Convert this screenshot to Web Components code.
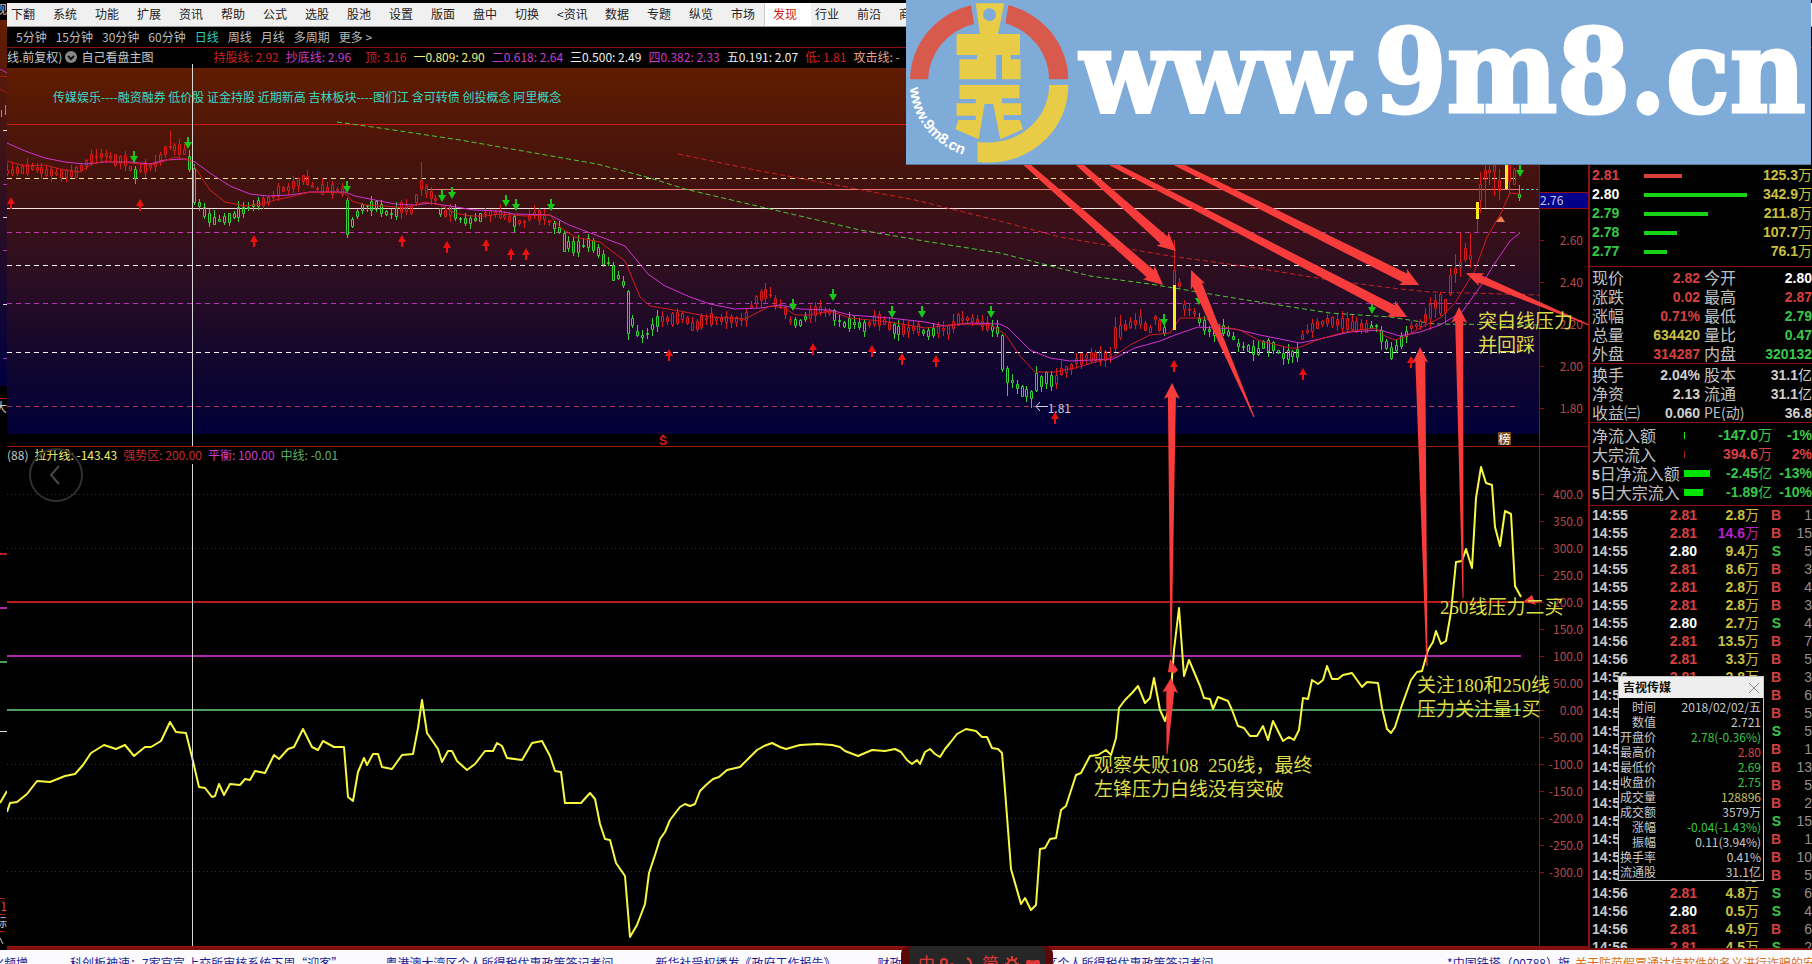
<!DOCTYPE html>
<html lang="zh-CN">
<head>
<meta charset="utf-8">
<title>吉视传媒 日线</title>
<style>
html,body{margin:0;height:100%;background:#000;overflow:hidden}
body{font:12px/16px "Noto Sans CJK SC",sans-serif;color:#c8c8c8}
</style>
</head>
<body>
<trading-app></trading-app>
<script>
const define = (name, html, setup) => customElements.define(name, class extends HTMLElement {
  constructor() {
    super();
    this.attachShadow({mode: 'open'}).innerHTML = html;
  }
  connectedCallback() {
    if (this.ready) return;
    this.ready = true;
    if (setup) setup(this.shadowRoot, this);
  }
});

/* ---------- menu ---------- */
define('menu-bar', `<style>
:host{display:block;margin-top:3px;height:23px;background:#f0f0f0;border-bottom:1px solid #999;overflow:hidden}
nav{display:flex;height:100%}
button{font:inherit;color:#222;background:none;border:0;margin:0;padding:0 0 2px 4px;min-width:42px;text-align:left;white-space:nowrap;line-height:20px;flex:none}
button.wide{min-width:48px}
button.on{color:#d01818;background:#fff;box-shadow:-4px 0 0 #fff,-5px 0 0 #ccc}
</style><nav></nav>`, root => {
  const nav = root.querySelector('nav');
  '下翻 系统 功能 扩展 资讯 帮助 公式 选股 股池 设置 版面 盘中 切换 <资讯 数据 专题 纵览 市场 发现 行业 前沿 商城'.split(' ').forEach(t => {
    const b = document.createElement('button');
    b.textContent = t;
    if (t[0] === '<') b.className = 'wide';
    if (t === '发现') b.className = 'on';
    nav.append(b);
  });
});

define('period-bar', `<style>
:host{display:block;height:20px;border-bottom:1px solid #8c1010}
nav{display:flex;gap:9px;padding-left:9px}
button{font:inherit;color:#bbb;background:none;border:0;margin:0;padding:0;line-height:20px;white-space:nowrap}
.on{color:#2fc8b8}
</style><nav><button>5分钟</button><button>15分钟</button><button>30分钟</button><button>60分钟</button><button class="on">日线</button><button>周线</button><button>月线</button><button>多周期</button><button>更多 &gt;</button></nav>`);

/* ---------- shared drawing helpers ---------- */
const line = (pts, stroke, extra = '') => `<polyline points="${pts}" fill="none" stroke="${stroke}" ${extra}/>`;
const hline = (y, stroke, x1, x2, extra = '') => `<path d="M${x1} ${y}H${x2}" stroke="${stroke}" ${extra}/>`;

const trace = [[8,172],[35,168],[45,172],[60,174],[75,174],[85,165],[92,158],[105,154],[115,160],[125,160],[130,168],[135,174],[145,168],[155,165],[163,154],[168,147],[175,148],[185,152],[190,163],[195,185],[200,207],[206,214],[212,221],[224,220],[230,218],[240,212],[255,205],[270,200],[280,190],[290,188],[298,182],[305,178],[315,189],[340,190],[345,193],[348,218],[353,224],[358,213],[363,207],[378,205],[385,213],[395,215],[400,207],[412,210],[418,195],[422,184],[428,192],[435,198],[442,215],[453,210],[458,218],[468,222],[482,217],[486,213],[498,213],[507,218],[516,222],[526,222],[532,213],[546,218],[552,224],[561,231],[565,242],[571,247],[581,247],[589,243],[595,246],[601,255],[605,262],[610,264],[616,273],[621,281],[625,285],[630,312],[635,332],[645,338],[650,330],[660,319],[669,320],[685,316],[690,325],[695,328],[705,319],[743,320],[748,315],[753,303],[764,294],[769,293],[777,304],[784,307],[789,320],[799,324],[808,316],[819,309],[833,314],[843,325],[853,323],[867,328],[872,320],[882,320],[892,328],[898,331],[918,328],[923,332],[932,334],[936,329],[951,330],[956,320],[975,319],[982,324],[1001,332],[1006,352],[1011,380],[1022,391],[1030,394],[1036,399],[1041,382],[1045,377],[1055,383],[1060,372],[1071,368],[1075,362],[1086,357],[1110,356],[1115,350],[1119,339],[1124,328],[1140,320],[1150,332],[1154,315],[1159,325],[1169,335],[1179,282],[1184,307],[1194,312],[1199,320],[1213,334],[1223,329],[1233,337],[1238,345],[1258,352],[1263,345],[1273,346],[1283,356],[1298,353],[1303,335],[1313,327],[1327,321],[1347,324],[1367,328],[1377,326],[1383,339],[1392,354],[1402,341],[1411,327],[1421,324],[1426,318],[1437,302],[1447,307],[1452,285],[1457,265],[1467,252],[1472,254],[1477,210],[1482,185],[1487,178],[1492,165],[1501,190],[1511,170],[1516,180],[1520,198]];
const green = [[132,137],[189,259],[347,400],[440,445],[451,485],[506,508],[514,519],[551,662],[792,809],[832,868],[890,899],[921,934],[990,1053],[1163,1170],[1198,1300],[1371,1408],[1518,1523]];
/* body top, body bottom, high, low of the bars that stand out */
const special = {33:[146,148,131,150],37:[156,170,150,172],38:[168,203,164,205],69:[200,235,198,238],84:[180,190,162,196],113:[233,252,231,252],123:[265,281,262,281],126:[291,334,290,340],202:[335,370,334,372],203:[368,383,366,396],208:[391,399,390,408],209:[373,391,366,392],225:[327,349,317,352],226:[325,338,315,340],237:[270,295,240,299],279:[330,342,326,350],293:[275,295,268,296],295:[262,268,233,277],297:[255,260,233,268],300:[170,180,160,208],302:[165,172,160,196]};
function candles() {
  let out = '', k = 0;
  for (let i = 0; i < 308; i++) {
    const x = 7.5 + Math.round(4.925 * i);
    if ([236, 298, 304].includes(i)) continue;
    while (k < trace.length - 2 && trace[k + 1][0] < x) k++;
    const [ax, ay] = trace[k], [bx, by] = trace[k + 1];
    const y = ay + (by - ay) * Math.min(1, Math.max(0, (x - ax) / (bx - ax)));
    const r = n => Math.abs(Math.sin(i * 12.9898 + n * 78.233) * 43758.5453) % 1;
    const late = x > 1430 ? 2 : 1;
    const h = 1 + r(1) * 5 * late;
    let [t, b, hi, lo] = special[i] || [y - h, y + h, y - h - r(2) * 7 * late, y + h + r(3) * 6 * late];
    t = Math.round(t); b = Math.round(b); hi = Math.round(hi); lo = Math.round(lo);
    const c = green.some(g => x >= g[0] && x <= g[1]) ? '#35d435' : '#d81c1c';
    out += `<path d="M${x} ${hi}V${t}M${x} ${b}V${lo}M${x - 1} ${t + .5}h2v${b - t - 1}h-2z" stroke="${c}" fill="none"/>`;
  }
  return out;
}
const down = [[134,151],[188,137],[347,181],[442,190],[452,187],[506,195],[516,199],[551,199],[793,299],[833,289],[892,306],[922,306],[991,306],[1164,314],[1199,293],[1372,302],[1520,165]];
const up = [[11,197],[140,199],[254,235],[402,235],[447,241],[486,239],[511,248],[526,248],[669,349],[813,343],[872,345],[902,353],[936,355],[1055,412],[1174,360],[1303,368],[1411,356]];

define('price-chart', `<style>
:host{display:flex;flex-direction:column;position:relative;min-height:0;border-bottom:1px solid #a01808}
.legend{display:flex;gap:7px;height:20px;line-height:18px;white-space:nowrap;flex:none;overflow:hidden}
.legend svg{width:12px;height:12px;margin:3px -3px 0 -4px}
.name{margin-right:53px}
.plot{flex:1;min-height:0;display:block;width:100%}
.r{color:#d42020}.m{color:#c83cc8}.gap{margin-right:7px}.y{color:#f0f080}.w{color:#eee}.p{color:#e8a090}
.tags{position:absolute;left:46px;right:900px;top:41px;color:#35dcc8;white-space:nowrap}
.low{position:absolute;right:calc(100% - 1064px);top:352px;color:#c8c8d8}
.mark{position:absolute;left:652px;bottom:-2px;color:#e01818;font:bold 12px/14px "Liberation Sans",sans-serif}
.rank{position:absolute;right:28px;bottom:1px;background:#7c4a1c;color:#fff;line-height:13px;width:13px;text-align:center}
</style>
<div class="legend"><span>线.前复权)</span><svg viewBox="0 0 12 12"><circle cx="6" cy="6" r="6" fill="#888"/><path d="M3 5l3 3 3-3" fill="none" stroke="#111" stroke-width="2"/></svg><span class="name">自己看盘主图</span><span class="r">持股线: 2.92</span><span class="m gap">抄底线: 2.96</span><span class="r">顶: 3.16</span><span class="y">一0.809: 2.90</span><span class="m">二0.618: 2.64</span><span class="w">三0.500: 2.49</span><span class="m">四0.382: 2.33</span><span class="w">五0.191: 2.07</span><span class="r">低: 1.81</span><span class="p">攻击线: -</span></div>
<svg class="plot" viewBox="7 68 1532 378" preserveAspectRatio="none"></svg>
<div class="tags">传媒娱乐----融资融券 低价股 证金持股 近期新高 吉林板块----图们江 含可转债 创投概念 阿里概念</div>
<span class="low">1.81</span><span class="mark">S</span><span class="rank">榜</span>`, root => {
  const dash = 'stroke-dasharray="5 4"';
  root.querySelector('.plot').innerHTML = `
<defs><linearGradient id="g" x1="0" y1="0" x2="0" y2="1"><stop offset="0" stop-color="#601c00"/><stop offset=".3" stop-color="#43120e"/><stop offset=".55" stop-color="#2e0e20"/><stop offset=".8" stop-color="#12062e"/><stop offset="1" stop-color="#000038"/></linearGradient></defs>
<rect x="7" y="68" width="1532" height="366" fill="url(#g)"/>
${hline(124.5,'#d01810',7,1539)}
${hline(178.5,'#f0e890',7,1517,dash)}
${hline(189.5,'#e87c74',427,1520)}
${hline(208.5,'#f8e0e0',7,1539)}
${hline(232.5,'#c834b8',7,1520,dash)}
${hline(265.5,'#f8f8f8',7,1517,dash)}
${hline(303.5,'#b434b4',7,1517,dash)}
${hline(352.5,'#f8f8f8',7,1517,dash)}
${hline(406.5,'#b83848',7,1517,dash)}
${line('337,122 380,128 420,134 460,140 500,147 540,154 597,164 650,178 685,189 740,202 800,216 860,230 930,242 1000,253 1090,276 1150,284 1240,299 1330,313 1390,317 1435,324 1539,325','#4cc832','stroke-dasharray="5 3"')}
${line('678,154 760,171 820,182 915,200 1000,221 1060,237 1170,256 1250,267 1330,280 1400,289 1430,292 1539,295','#cc2020','stroke-dasharray="5 3"')}
${candles()}
${line('7,143 25,151 45,158 65,162 85,164 105,162 130,162 150,164 165,160 185,159 195,162 210,173 230,186 250,194 268,196 290,195 310,192 345,192 355,196 375,200 395,204 415,205 430,203 450,206 474,210 498,211 514,214 550,215 569,225 593,234 625,246 648,274 665,286 690,297 710,304 735,309 760,308 780,305 800,309 830,310 850,315 890,318 925,322 945,326 970,323 1000,324 1008,328 1030,350 1050,358 1070,361 1113,359 1135,348 1160,341 1175,335 1198,327 1215,328 1235,329 1260,335 1300,343 1320,339 1350,332 1380,330 1400,336 1420,332 1440,325 1462,312 1480,287 1495,263 1510,241 1520,233','#d034d0')}
${line('7,161 25,166 45,165 60,169 80,172 92,164 105,161 130,163 150,165 162,162 175,157 190,160 200,175 210,190 225,202 245,206 262,204 275,200 290,197 310,192 345,193 352,201 365,205 385,206 405,208 415,205 425,202 440,205 455,213 470,216 485,216 500,214 525,216 550,215 560,227 575,237 600,242 625,261 640,297 650,306 680,311 710,317 745,319 770,306 785,308 795,315 810,315 830,311 850,318 890,322 925,328 960,324 990,325 1005,334 1020,356 1035,372 1055,372 1075,368 1113,357 1130,345 1150,335 1170,333 1180,318 1205,318 1218,326 1240,330 1260,341 1290,348 1298,348 1320,339 1345,332 1375,328 1385,336 1395,340 1405,337 1420,328 1440,318 1455,303 1475,270 1487,237 1500,215 1510,193 1520,194','#d41c1c')}
<path d="M1174.500 285V330M1477.500 202V219M1506.500 160V189" stroke="#ffe820" stroke-width="3"/>
<path d="M1477.500 219V233" stroke="#d81c1c"/>
<path d="M1521 189.500H1538" stroke="#50c0c8" stroke-dasharray="3 2"/>
<path d="M1496 222l5-6 4 6z" fill="#f08050"/>
<path d="M1048 406.500H1036M1040 402l-4 4.500 4 4.500" fill="none" stroke="#d0d0e0"/>
<path d="M661 437l2-3 2 3z" fill="#e01818"/>
${down.map(([x,y]) => `<path d="M${x-1} ${y}h2v5h3l-4 7-4-7h3z" fill="#18c818"/>`).join('')}
${up.map(([x,y]) => `<path d="M${x-1} ${y+12}h2v-5h3l-4-7-4 7h3z" fill="#ec1010"/>`).join('')}`;
});

define('osc-chart', `<style>
:host{display:flex;flex-direction:column;position:relative;min-height:0;border-bottom:1px solid #a01010}
.legend{display:flex;gap:6px;height:17px;line-height:15px;white-space:nowrap;flex:none}
svg{flex:1;min-height:0;width:100%;display:block}
.y{color:#f0f070}.r{color:#c82828}.m{color:#c83cc8}.g{color:#5cae68}
button{position:absolute;left:22px;top:1px;width:54px;height:54px;border:2px solid #303030;border-radius:50%;background:none;padding:0}
button svg{display:block;margin:auto;width:16px;height:22px}
</style>
<button aria-label="上一张"><svg viewBox="0 0 16 22"><path d="M11 2L3 11l8 9" fill="none" stroke="#484848" stroke-width="2"/></svg></button>
<div class="legend"><span>(88)</span><span class="y">拉升线: -143.43</span><span class="r">强势区: 200.00</span><span class="m">平衡: 100.00</span><span class="g">中线: -0.01</span></div>
<svg class="plot" viewBox="7 464 1532 482" preserveAspectRatio="none"></svg>`, root => {
  root.querySelector('.plot').innerHTML =
    [494.5,548.5,764.5,818.5,871.5].map(y => hline(y,'#6e1818',7,1539,'stroke-dasharray="1 3"')).join('') +
    hline(602,'#b81c1c',7,1539,'stroke-width="2"') + hline(656,'#a82ca8',7,1521,'stroke-width="2"') + hline(710,'#4c9c5c',7,1521,'stroke-width="2"') +
    line('7,812 10,803 17,802 27,794 37,781 50,782 65,776 75,774 83,765 91,753 104,745 116,749 125,745 134,756 145,747 151,747 161,741 170,722 176,732 186,733 192,757 199,787 205,788 212,797 215,796 219,784 224,795 230,784 240,785 245,779 250,780 255,771 265,773 274,755 279,759 288,749 294,747 303,729 312,747 318,750 323,741 334,747 344,747 348,797 353,801 358,772 364,758 367,765 373,754 378,754 382,767 392,769 402,755 413,754 418,728 422,700 427,733 438,749 442,762 448,751 452,751 457,761 467,770 475,764 485,751 493,751 497,743 502,746 507,758 522,760 532,743 542,741 550,756 555,771 561,772 565,803 581,803 590,793 595,799 600,824 605,839 610,840 616,863 625,876 630,937 637,925 645,904 649,873 655,855 660,839 665,832 670,820 680,807 685,804 690,806 695,804 700,791 706,785 713,779 719,777 727,770 740,767 750,757 757,750 764,746 772,743 780,747 786,749 800,745 818,744 832,745 840,747 845,751 858,756 865,753 872,750 885,751 895,749 901,752 907,760 912,764 917,760 920,764 925,752 930,749 935,754 940,757 945,749 950,743 957,734 966,729 976,731 982,737 987,737 992,748 998,749 1002,753 1005,790 1011,869 1021,904 1025,898 1031,910 1036,905 1040,849 1045,848 1050,839 1056,838 1061,810 1066,806 1076,775 1081,773 1090,756 1098,755 1106,750 1111,755 1116,738 1119,708 1125,700 1132,693 1138,686 1145,703 1150,698 1154,678 1160,710 1165,721 1170,705 1174,650 1179,608 1184,676 1189,660 1200,686 1204,698 1210,699 1213,709 1218,697 1228,701 1232,710 1238,726 1244,728 1250,736 1257,736 1263,726 1268,740 1273,721 1283,741 1289,737 1294,740 1299,730 1303,698 1308,699 1312,680 1318,684 1323,680 1327,666 1332,679 1338,679 1343,675 1352,673 1362,687 1367,682 1378,683 1382,708 1387,729 1391,733 1395,727 1402,705 1411,680 1417,672 1422,671 1428,650 1433,642 1436,631 1441,644 1446,641 1451,612 1456,562 1462,561 1466,549 1472,568 1476,498 1481,467 1486,483 1492,485 1495,527 1500,546 1505,511 1511,514 1515,586 1521,597','#f8f840','stroke-width="2" stroke-linejoin="round"');
});

/* ---------- vertical scale beside a chart ---------- */
define('value-axis', `<style>
:host{display:block;position:relative;border:solid #901010;border-width:0 1px 1px;min-height:0;overflow:hidden}
ol{list-style:none;margin:0;padding:var(--lead) 5px 0 0;text-align:right;color:#b84848}
li{height:var(--step);line-height:var(--step);position:relative}
li::before{content:"";position:absolute;left:0;top:50%;width:4px;border-top:1px solid #901010}
</style><ol></ol><slot></slot>`, (root, host) => {
  root.querySelector('ol').innerHTML = host.getAttribute('values').split(' ').map(v => `<li>${v}</li>`).join('');
});

/* ---------- order book, quote and trades ---------- */
define('order-book', `<style>
:host{display:block;padding:118px 0 5px 2px;border-bottom:1px solid #901010}
table{border-collapse:collapse;width:100%;font:bold 14px/19px "Liberation Sans","Noto Sans CJK SC",sans-serif}
td{padding:0;height:19px;white-space:nowrap}
td:last-child{text-align:right;color:#c8c040}
small{font:14px/14px "Noto Sans CJK SC",sans-serif}
td:first-child{width:52px}
i{display:block;height:4px;background:currentColor}
.r{color:#d84040}.w{color:#fff}.g{color:#38c848}.g i{color:#18d418}
</style><table><tbody></tbody></table>`, root => {
  root.querySelector('tbody').innerHTML = [['2.81','r',38,'125.3'],['2.80','w',103,'342.9'],['2.79','g',64,'211.8'],['2.78','g',33,'107.7'],['2.77','g',23,'76.1']]
    .map(([p,c,w,v]) => `<tr><td class="${c}">${p}</td><td class="${c==='w'?'g':c}"><i style="width:${w}px"></i></td><td>${v}<small>万</small></td></tr>`).join('');
});

define('quote-grid', `<style>
:host{display:block;border-bottom:1px solid #901010;padding:1px 0 0 2px}
dl{display:grid;grid-auto-rows:19px;margin:0;grid-template-columns:48px 60px 46px 1fr}
dt{font-size:16px;line-height:19px;white-space:nowrap;color:#c0c0c0}
dt:nth-of-type(2n){padding-left:4px}
dt.s{font-size:14px}
dd{margin:0;text-align:right;font:bold 14px/21px "Liberation Sans","Noto Sans CJK SC",sans-serif;white-space:nowrap;color:#d0d0d0}
small{font:14px/14px "Noto Sans CJK SC",sans-serif}
.r{color:#d84040}.w{color:#fff}.g{color:#38c848}.y{color:#c8c040}
</style><dl></dl>`, (root, host) => {
  root.querySelector('dl').innerHTML = host.getAttribute('data').split(';').map(s => {
    const [k, v, c] = s.split(',');
    return `<dt class="${k.startsWith('PE') ? 's' : ''}">${k}</dt><dd class="${c || ''}">${v.replace('亿', '<small>亿</small>')}</dd>`;
  }).join('');
});

define('money-flow', `<style>
:host{display:block;border-bottom:1px solid #901010;padding:3px 0 3px 2px}
ul{list-style:none;margin:0;padding:0}
li{display:grid;grid-template-columns:92px 26px 62px 1fr;align-items:center;height:19px;white-space:nowrap;text-align:right;font:bold 14px/19px "Liberation Sans",sans-serif}
span{font:16px/19px "Noto Sans CJK SC",sans-serif;text-align:left;color:#c0c0c0}
b{font:bold 14px/14px "Liberation Sans",sans-serif;color:#d0d0d0}
small{font:14px/14px "Noto Sans CJK SC",sans-serif}
i{height:7px;background:#00e400}
.r{color:#d84040}.g{color:#38c848}.r i{background:#a02020}
</style><ul></ul>`, root => {
  root.querySelector('ul').innerHTML = [['净流入额','g',1,'-147.0','万','-1%'],['大宗流入','r',1,'394.6','万','2%'],['<b>5</b>日净流入额','g',26,'-2.45','亿','-13%'],['<b>5</b>日大宗流入','g',19,'-1.89','亿','-10%']]
    .map(([n,c,w,v,u,p]) => `<li class="${c}"><span>${n}</span><i style="width:${w}px"></i><div>${v}<small>${u}</small></div><div>${p}</div></li>`).join('');
});

define('trade-list', `<style>
:host{display:block;flex:1;min-height:0;overflow:hidden;padding-left:2px}
table{border-collapse:collapse;width:100%;table-layout:fixed;font:bold 14px/18px "Liberation Sans",sans-serif;color:#c8c8c8}
td{padding:0;height:18px;line-height:18px;white-space:nowrap;text-align:right;overflow:hidden}
td:nth-child(1){width:50px;text-align:left}td:nth-child(2){width:55px}td:nth-child(3){width:62px;color:#c8c040}td:nth-child(4){width:22px}
td:nth-child(5){font-weight:400;color:#909090}
small{font:14px/14px "Noto Sans CJK SC",sans-serif}
.r{color:#d84040}.w{color:#fff}.g{color:#38c848}td.m{color:#b820c8!important}
</style><table><tbody></tbody></table>`, root => {
  const side = 'BBSBBBSBBBBBSBBBBSBBBSSBS';
  const vol = ['2.8','14.6','9.4','8.6','2.8','2.8','2.7','13.5','3.3','2.8','','','','','','','','','','','2.8','4.8','0.5','4.9','4.5'];
  const count = [1,15,5,3,4,3,4,7,5,3,6,5,5,1,13,5,2,15,1,10,5,6,4,6,2];
  root.querySelector('tbody').innerHTML = count.map((n, i) => {
    const white = [2, 6, 22].includes(i);
    return `<tr><td>14:5${i < 7 ? 5 : 6}</td><td class="${white ? 'w' : 'r'}">${vol[i] ? (white ? '2.80' : '2.81') : ''}</td><td class="${i === 1 ? 'm' : ''}">${vol[i] ? vol[i] + '<small>万</small>' : ''}</td><td class="${side[i] === 'S' ? 'g' : 'r'}">${side[i]}</td><td>${n}</td></tr>`;
  }).join('');
});

define('day-popup', `<style>
:host{display:block;position:absolute;box-sizing:border-box;left:28px;top:628px;width:146px;background:#000;border:1px solid #c8c8c8}
header{display:flex;justify-content:space-between;align-items:center;height:21px;background:#eee;color:#111;padding:0 3px 0 4px}
h2{font:bold 12px/18px "Noto Sans CJK SC",sans-serif;margin:0 0 2px}
button{border:0;background:none;padding:0;width:12px;height:12px}
button svg{display:block;width:12px;height:12px}
dl{display:grid;grid-template-columns:36px 1fr;grid-auto-rows:15px;line-height:15px;margin:0;padding:1px 2px 1px 1px;text-align:right;white-space:nowrap}
dd{margin:0}
.g{color:#38c848}.r{color:#d84040}.y{color:#c8c060}
</style><header><h2>吉视传媒</h2><button aria-label="关闭"><svg viewBox="0 0 12 12"><path d="M1 1l10 10M11 1L1 11" stroke="#888"/></svg></button></header>
<dl><dt>时间</dt><dd>2018/02/02/五</dd><dt>数值</dt><dd>2.721</dd><dt>开盘价</dt><dd class="g">2.78(-0.36%)</dd><dt>最高价</dt><dd class="r">2.80</dd><dt>最低价</dt><dd class="g">2.69</dd><dt>收盘价</dt><dd class="g">2.75</dd><dt>成交量</dt><dd class="y">128896</dd><dt>成交额</dt><dd>3579万</dd><dt>涨幅</dt><dd class="g">-0.04(-1.43%)</dd><dt>振幅</dt><dd>0.11(3.94%)</dd><dt>换手率</dt><dd>0.41%</dd><dt>流通股</dt><dd>31.1亿</dd></dl>`);

/* ---------- strip of the neighbouring window at the left edge ---------- */
define('edge-strip', `<style>
:host{display:block;position:relative;overflow:hidden}
svg{position:absolute;inset:0;width:100%;height:100%}
span{position:absolute;right:0;line-height:16px}
</style><svg viewBox="0 0 7 950" preserveAspectRatio="none"><defs><linearGradient id="s" x1="0" y1="0" x2="0" y2="1"><stop offset="0" stop-color="#661e00"/><stop offset=".5" stop-color="#2e0e20"/><stop offset="1" stop-color="#000040"/></linearGradient></defs>
<rect y="20" width="7" height="366" fill="url(#s)"/>
<path d="M0 76.500H7M0 89l7 4M0 398.500H7M0 898.500H5M0 914.500H5M0 931.500H5" stroke="#b01810"/><path d="M0 69l7 4" stroke="#c030c0"/><path d="M1.500 110v7M5.500 105v10" stroke="#35d435"/>
<path d="M3 130.500h4" stroke="#f0e890"/><path d="M3 184.500h4M3 250.500h4M3 358.500h4" stroke="#b830a8"/><path d="M3 217.500h4M3 304.500h4M0 731.500h7" stroke="#ddd"/>
<path d="M0 554h7" stroke="#b81c1c" stroke-width="2"/><path d="M0 608h7" stroke="#a82ca8" stroke-width="2"/><path d="M0 662h7" stroke="#4c9c5c" stroke-width="2"/><path d="M0 803l7-12" stroke="#f8f840" stroke-width="2"/><path d="M0 938l3 6" stroke="#ccc"/></svg>
<span style="top:1px">观</span><span style="top:399px">大</span><span style="top:898px;color:#d84040">1</span><span style="top:914px">标</span>`);

/* ---------- hand-drawn arrows and remarks over both charts ---------- */
define('chart-note', `<style>
:host{display:block;position:absolute;left:calc(var(--x)/1812*100%);top:calc(var(--y)/964*100%);font:19px/24px "Liberation Serif","Noto Sans CJK SC",serif;color:#dcdc48;white-space:pre}
</style><slot></slot>`);
define('mark-layer', `<style>
:host{display:block;position:absolute;inset:0;pointer-events:none}
svg{position:absolute;inset:0;width:100%;height:100%}
</style><svg viewBox="0 0 1812 964" preserveAspectRatio="none"></svg><slot></slot>`, root => {
  const arrow = ([tx, ty, x, y, w0, w1, len, half]) => {
    const L = Math.hypot(x - tx, y - ty), ux = (x - tx) / L, uy = (y - ty) / L;
    const p = (d, o) => `${(x - ux * d - uy * o).toFixed(1)},${(y - uy * d + ux * o).toFixed(1)}`;
    return `<polygon points="${p(0,0)} ${p(len,half)} ${p(len-2,w1)} ${p(L,w0)} ${p(L,-w0)} ${p(len-2,-w1)} ${p(len,-half)}" fill="#f83c3c"/>`;
  };
  root.querySelector('svg').innerHTML = `<path d="M192.500 64V446M192.500 464V946" stroke="#d8d8d8"/>` +
    [[999,140,1163,285,2,5,19,9],[1052,140,1176,251,2,5,18,9],[1066,140,1407,317,2,5,18,9],[1129,140,1419,285,2,5,18,9],
     [1254,417,1191,270,.5,5,18,8],[1589,325,1466,273,.5,4,17,7],[1171,655,1172,383,.5,4,16,8],[1427,666,1420,347,.5,5,16,8],[1463,598,1459,307,.5,4,16,8],[1167,754,1171,678,.5,4,15,8]].map(arrow).join('') +
    `<path d="M1170 659l8 11-3 3-7-1z M1524 601l8-6 4 10z" fill="#f83c3c"/>`;
});

/* ---------- banner ---------- */
define('site-banner', `<style>
:host{display:flex;align-items:flex-start;position:absolute;left:50%;right:1px;top:0;height:165px;background:#7fabd9;border-bottom:1px solid #56789a;box-sizing:border-box;overflow:hidden}
svg{width:168px;height:165px;flex:none}
a{font:bold 116px/128px "DejaVu Serif Condensed","DejaVu Serif",serif;color:#fff;text-decoration:none;white-space:nowrap;padding:7px 0 0 6px;-webkit-text-stroke:3px #fff}
svg text{font:bold 15px "Liberation Sans",sans-serif;fill:#fff}
</style><svg viewBox="0 0 168 165"><g transform="scale(.5817 .3333) translate(-10 0)"><path fill="#d85a4c" d="M17 238A136 232 0 0 1 122 16L127 72A105 175 0 0 0 48 238ZM289 238A136 232 0 0 0 186 16L181 70A105 175 0 0 1 256 238Z"/><path fill="#e8cc48" fill-rule="evenodd" d="M289 255A136 230 0 0 1 133 485V425A105 170 0 0 0 256 255ZM130 10H179L168 102H206V165H190V178H207V238H175V165H165V238H102V178H132V165H97V102H137ZM153 25a11 19 0 1 0 1 0ZM102 255H205V295H175V310H208V345H178V360H206L211 388L172 418L160 312H145L135 418L95 388L100 360H130V347H97V310H130V297H102Z"/></g><path id="arc" d="M4 88A80 76 0 0 0 70 158" fill="none"/><text><textPath href="#arc">www.9m8.cn</textPath></text></svg><a href="#">www.9m8.cn</a>`);

/* ---------- news ticker and input-method bar ---------- */
define('news-ticker', `<style>
:host{display:block;height:14px;background:#fbfbff;overflow:hidden;flex:none;position:relative}
nav{display:flex;justify-content:space-between;padding-top:4px;margin:0 -3px 0 -8px;white-space:nowrap}
div{display:flex;gap:42px}
div+div{gap:5px}
a{color:#1c1c98;text-decoration:none;line-height:17px}
.o{color:#d87020}
</style><nav><div><a href="#">化频增</a><a href="#">科创板神速：7家官宣 上交所审核系统下周“迎客”</a><a href="#">粤港澳大湾区个人所得税优惠政策答记者问</a><a href="#">新华社受权播发《政府工作报告》</a><a href="#">财政部有关负责人就粤港澳大湾区个人所得税优惠政策答记者问</a></div><div><a href="#">*中国铁塔（00788）旗</a><a class="o" href="#">关于防范假冒通达信软件的名义进行诈骗的安</a></div></nav>`);
define('ime-bar', `<style>
:host{display:block;position:absolute;left:calc(901/1812*100%);bottom:0;width:152px;height:18px;box-sizing:border-box;background:#5c0808;border-radius:8px 8px 0 0;padding:0 8px;overflow:hidden}
div{display:flex;gap:5px;background:#262626;border-radius:5px 5px 0 0;height:18px;padding:5px 9px 0;color:#e03838;font-size:17px;line-height:24px}
svg{width:16px;height:16px;margin-top:4px;flex:none}
</style><div><span>中</span><svg viewBox="0 0 16 16" fill="none" stroke="#e03838" stroke-width="2"><circle cx="4" cy="7" r="3"/><circle cx="12" cy="10" r="1"/></svg><svg viewBox="0 0 16 16"><path d="M6 3q6 3 3 10" fill="none" stroke="#e03838" stroke-width="2"/></svg><span>简</span><svg viewBox="0 0 16 16" stroke="#e03838" stroke-width="2" fill="none"><circle cx="8" cy="9" r="4"/><path d="M3 3l3 3M13 3l-3 3M8 1v4M1 9h3M12 9h3"/></svg><svg viewBox="0 0 16 16"><path d="M1 8q0-4 4-3 3 1 6 0 4-1 4 3l-3 5H4z" fill="#e03838"/></svg></div>`);

/* ---------- whole window ---------- */
define('trading-app', `<style>
:host{display:flex;flex-direction:column;height:100vh;position:relative;overflow:hidden}
.window{flex:1;min-height:0;display:grid;grid-template-columns:7px minmax(0,1fr);grid-template-rows:auto minmax(0,1fr)}
edge-strip{grid-row:1/3}
main{display:grid;grid-template-columns:minmax(0,1fr) 50px;grid-template-rows:minmax(0,399fr) minmax(0,500fr);min-height:0;min-width:0;border-bottom:3px solid #801010}
.body{display:grid;grid-template-columns:minmax(0,1fr) 223px;min-height:0}
aside{display:flex;flex-direction:column;border-left:1px solid #901010;min-height:0;position:relative;box-sizing:border-box;border-bottom:2px solid #801010}
output{position:absolute;left:0;right:0;top:144px;height:15px;line-height:14px;background:#000088;border:solid #901010;border-width:1px 0;color:#c8c8e8}
</style>
<div class="window">
<edge-strip></edge-strip>
<header><menu-bar></menu-bar><period-bar></period-bar></header>
<div class="body">
<main>
<price-chart></price-chart>
<value-axis style="--lead:171px;--step:42px" values="2.60 2.40 2.20 2.00 1.80"><output>2.76</output></value-axis>
<osc-chart></osc-chart>
<value-axis style="--lead:33px;--step:27px" values="400.0 350.0 300.0 250.0 200.0 150.0 100.0 50.00 0.00 -50.00 -100.0 -150.0 -200.0 -250.0 -300.0"></value-axis>
</main>
<aside>
<order-book></order-book>
<quote-grid data="现价,2.82,r;今开,2.80,w;涨跌,0.02,r;最高,2.87,r;涨幅,0.71%,r;最低,2.79,g;总量,634420,y;量比,0.47,g;外盘,314287,r;内盘,320132,g"></quote-grid>
<quote-grid data="换手,2.04%;股本,31.1亿;净资,2.13;流通,31.1亿;收益㈢,0.060;PE(动),36.8"></quote-grid>
<money-flow></money-flow>
<trade-list></trade-list>
<day-popup></day-popup>
</aside>
</div>
</div>
<news-ticker></news-ticker>
<mark-layer>
<chart-note style="--x:1478;--y:310">突白线压力
并回踩</chart-note>
<chart-note style="--x:1440;--y:596">250线压力二买</chart-note>
<chart-note style="--x:1417;--y:674">关注180和250线
压力关注量1买</chart-note>
<chart-note style="--x:1094;--y:754">观察失败108  250线，最终
左锋压力白线没有突破</chart-note>
</mark-layer>
<site-banner></site-banner>
<ime-bar></ime-bar>`);
</script>
</body>
</html>
